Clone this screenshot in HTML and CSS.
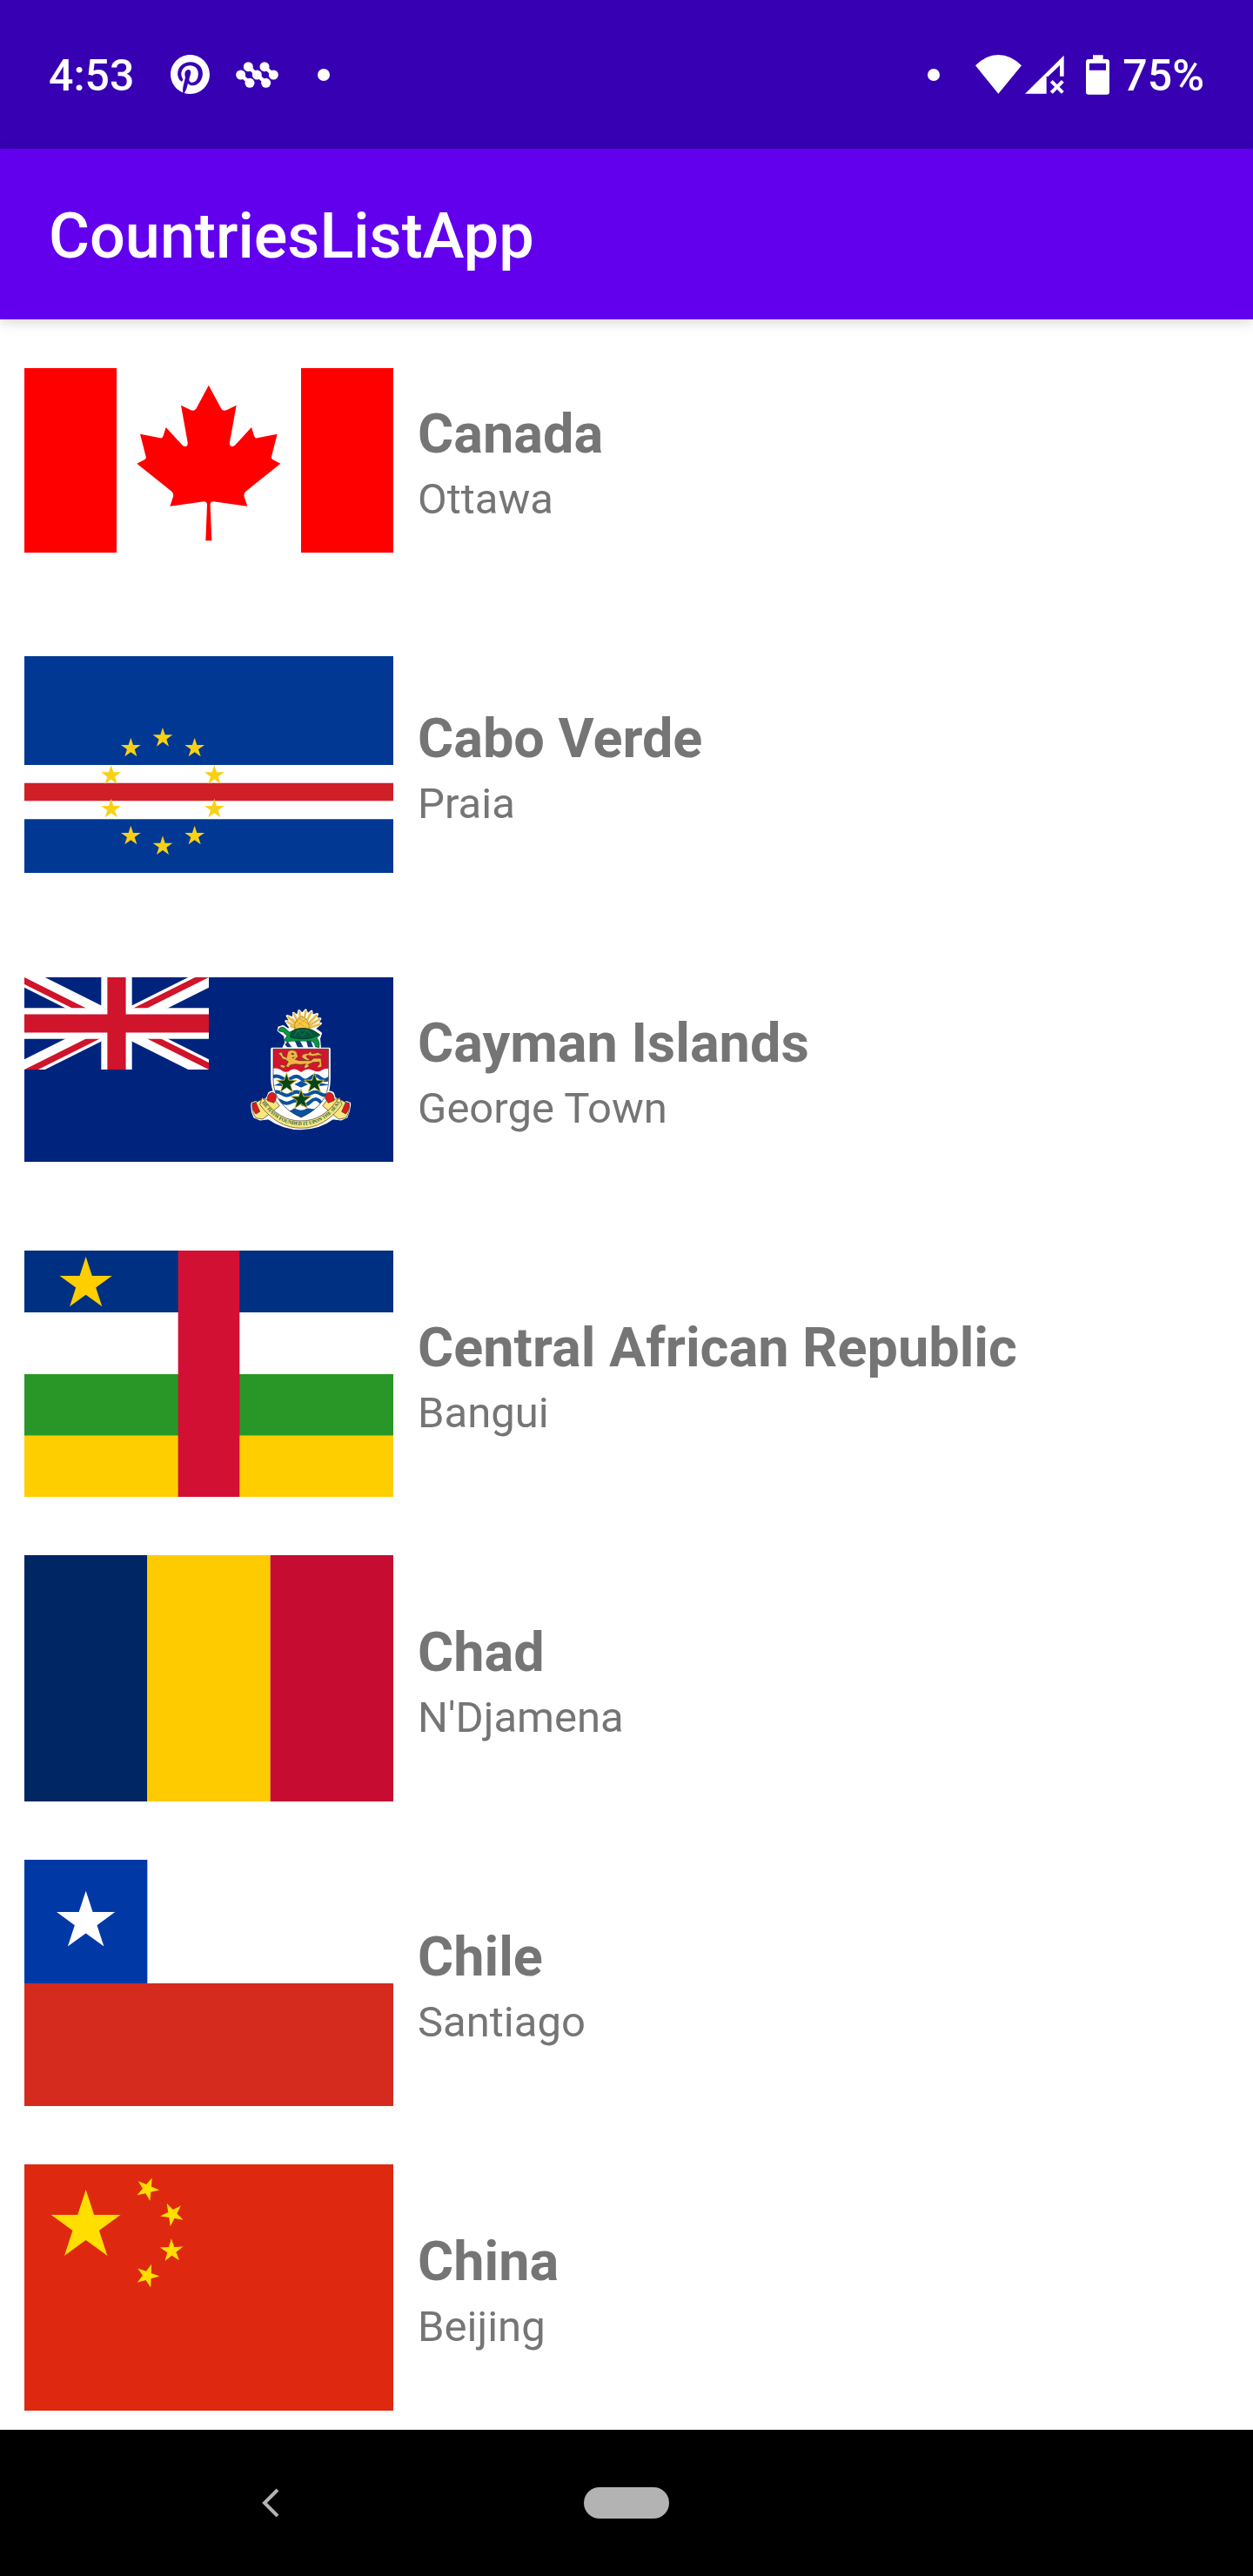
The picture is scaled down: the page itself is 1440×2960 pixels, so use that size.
FILE: index.html
```html
<!DOCTYPE html>
<html lang="en">
<head>
<meta charset="utf-8">
<meta name="viewport" content="width=device-width, initial-scale=1">
<title>CountriesListApp</title>
<link rel="stylesheet" href="styles.css">
</head>
<body>
<svg class="defs" aria-hidden="true">
  <defs>
    <polygon id="star" points="0,-100 22.5,-30.9 95.1,-30.9 36.3,11.8 58.8,80.9 0,38.2 -58.8,80.9 -36.3,11.8 -95.1,-30.9 -22.5,-30.9"/>
  </defs>
</svg>

<div class="status-bar">
  <div class="status-group">
    <time class="status-text">4:53</time>
    <svg class="icon-pinterest" viewBox="0 0 24 24" role="img" aria-label="Pinterest"><path fill="#fff" d="M12.017 0C5.396 0 .029 5.367.029 11.987c0 5.079 3.158 9.417 7.618 11.162-.105-.949-.199-2.403.041-3.439.219-.937 1.406-5.957 1.406-5.957s-.359-.72-.359-1.781c0-1.663.967-2.911 2.168-2.911 1.024 0 1.518.769 1.518 1.688 0 1.029-.653 2.567-.992 3.992-.285 1.193.6 2.165 1.775 2.165 2.128 0 3.768-2.245 3.768-5.487 0-2.861-2.063-4.869-5.008-4.869-3.41 0-5.409 2.562-5.409 5.199 0 1.033.394 2.143.889 2.741.099.12.112.225.085.345-.09.375-.293 1.199-.334 1.363-.053.225-.172.271-.401.165-1.495-.69-2.433-2.878-2.433-4.646 0-3.776 2.748-7.252 7.92-7.252 4.158 0 7.392 2.967 7.392 6.923 0 4.135-2.607 7.462-6.233 7.462-1.214 0-2.354-.629-2.758-1.379l-.749 2.848c-.269 1.045-1.004 2.352-1.498 3.146 1.123.345 2.306.535 3.55.535 6.607 0 11.985-5.365 11.985-11.987C23.97 5.39 18.592.026 11.985.026z"/></svg>
    <svg class="icon-dots" viewBox="0 0 147 90" aria-hidden="true">
      <g fill="#fff"><circle cx="43" cy="17" r="16.500"/><circle cx="99" cy="17" r="16.500"/><circle cx="17" cy="45" r="16.500"/><circle cx="73" cy="45" r="16.500"/><circle cx="130" cy="45" r="16.500"/><circle cx="48" cy="73" r="16.500"/><circle cx="104" cy="73" r="16.500"/></g>
      <path stroke="#fff" stroke-width="13" d="M43 17l61 56M99 17l31 28M17 45l31 28"/>
    </svg>
    <span class="dot"></span>
  </div>
  <div class="status-group">
    <span class="dot"></span>
    <svg class="icon-wifi" viewBox="0 0 159 135" role="img" aria-label="Wi-Fi"><path fill="#fff" d="M0 37Q36 0 79 0t80 37L79 134z"/></svg>
    <svg class="icon-signal" viewBox="0 0 135 135" role="img" aria-label="No mobile data"><path fill="#fff" d="M134 2v72h-14V36L80 74h-6v60H0z"/><path stroke="#fff" stroke-width="12" d="M91 91l39 39M130 91l-39 39"/></svg>
    <svg class="icon-battery" viewBox="0 0 81 138" role="img" aria-label="Battery"><path fill="#fff" fill-rule="evenodd" d="M24 1h35v14h13q9 0 9 9v104q0 9-9 9H9q-9 0-9-9V24q0-9 9-9h15zM12 29v24h57V29z"/></svg>
    <span class="status-text">75%</span>
  </div>
</div>

<header class="app-bar"><h1 class="app-title">CountriesListApp</h1></header>

<main class="content">
  <ul class="country-list">
    <li class="country">
      <svg class="flag" viewBox="84 69 1272 636" role="img" aria-label="Flag of Canada">
        <path fill="#fff" d="M84 69h1272v636H84z"/>
        <path fill="#f00" d="M84 69h318v636H84zM1038 69h318v636h-318z"/>
        <path fill="#f00" d="M719.500 128L676 209Q670 218 658 214L624 197L647 325Q648 339 638 339Q632 339 628 334L572 273L563 302Q560 312 552 310L483 296L503 374Q505 381 499 384L472 398L592 494Q599 500 597 512L586 545L703 529Q714 529 714 541L709 664H730L725 541Q725 529 736 529L853 545L842 512Q840 500 847 494L967 398L940 384Q934 381 936 374L956 296L887 310Q879 312 876 302L867 273L811 334Q807 339 801 339Q791 339 792 325L815 197L781 214Q769 218 763 209z"/>
      </svg>
      <div class="country-text"><h2 class="name">Canada</h2><p class="capital">Ottawa</p></div>
    </li>
    <li class="country">
      <svg class="flag flag-tall" viewBox="84 72 1272 747" role="img" aria-label="Flag of Cabo Verde">
        <path fill="#003893" d="M84 72h1272v747H84z"/><path fill="#fff" d="M84 447h1272v187H84z"/><path fill="#cf2027" d="M84 509h1272v62H84z"/>
        <g fill="#f7d116">
          <use href="#star" transform="translate(561 354) scale(.36)"/><use href="#star" transform="translate(451 389) scale(.36)"/><use href="#star" transform="translate(671 389) scale(.36)"/><use href="#star" transform="translate(383 483) scale(.36)"/><use href="#star" transform="translate(739 483) scale(.36)"/><use href="#star" transform="translate(383 599) scale(.36)"/><use href="#star" transform="translate(739 599) scale(.36)"/><use href="#star" transform="translate(451 692) scale(.36)"/><use href="#star" transform="translate(671 692) scale(.36)"/><use href="#star" transform="translate(561 727) scale(.36)"/>
        </g>
      </svg>
      <div class="country-text"><h2 class="name">Cabo Verde</h2><p class="capital">Praia</p></div>
    </li>
    <li class="country">
      <svg class="flag" viewBox="84 69 1272 636" role="img" aria-label="Flag of the Cayman Islands">
        <path fill="#00247d" d="M84 69h1272v636H84z"/>
        <svg x="84" y="69" width="636" height="318" viewBox="0 0 60 30">
          <clipPath id="saltire"><path d="M30 15h30v15zv15h-30zh-30v-15zv-15h30z"/></clipPath>
          <path stroke="#fff" stroke-width="6" d="M0 0l60 30M60 0L0 30"/>
          <path stroke="#cf142b" stroke-width="4" clip-path="url(#saltire)" d="M0 0l60 30M60 0L0 30"/>
          <path stroke="#fff" stroke-width="10" d="M30 0v30M0 15h60"/>
          <path stroke="#cf142b" stroke-width="6" d="M30 0v30M0 15h60"/>
        </svg>
        <g transform="translate(810 120)" stroke-linejoin="round">
          <!-- white outline behind the whole crest -->
          <path fill="#fff" stroke="#fff" stroke-width="9" d="M128 196H325V300Q324 340 316 350Q328 340 338 350L343 366L360 376L376 404L384 380L395 384Q395 405 384 430L366 438L338 434Q290 470 228 470T116 434L88 438L68 430Q57 410 60 384L72 380L80 400L95 376L112 366L118 350Q128 340 138 350Q128 320 128 300z"/>
          <path fill="#fff" stroke="#fff" stroke-width="8" d="M168 190L176 174L172 150L150 132L152 122L166 118L184 130L192 124L176 100L194 106L180 82L202 90L202 72L216 84L221 64L232 76L244 62L250 78L264 66L266 82L284 76L278 92L294 92L284 106L296 108L274 126L296 142L290 160L293 192z"/>
          <!-- pineapple -->
          <path stroke="#e9bd4a" stroke-width="8" fill="none" d="M230 132L178 101M230 132L182 84M230 132L202 72M230 132L222 65M230 132L245 63M230 132L264 68M230 132L283 78M230 132L294 92M230 132L295 110M230 132L190 116M230 132L196 92"/>
          <path fill="#f9c846" stroke="#a87925" stroke-width="2" d="M206 128Q202 96 230 82Q258 96 256 128z"/>
          <path stroke="#936b22" stroke-width="2" stroke-dasharray="4 5" fill="none" d="M212 100L250 126M220 90L256 112M246 92L208 122M234 86L206 106"/>
          <!-- turtle -->
          <path fill="#0b9444" stroke="#032" stroke-width="2" d="M150 128Q160 116 172 124L188 138Q240 110 294 147L282 158Q294 170 290 191L272 187L266 169H206L180 172L170 166L180 150Q170 144 168 138L151 134z"/>
          <path fill="#00563b" stroke="#022" stroke-width="2" d="M191 154Q190 130 220 125Q265 120 289 146Q265 164 225 161Q200 160 191 154z"/>
          <path fill="none" stroke="#1c8d5f" stroke-width="2" d="M205 152L216 132L232 152L250 130L266 150M216 132H250"/>
          <!-- wreath -->
          <path fill="#fff" d="M168 191Q172 172 194 170H264Q276 176 276 192z"/>
          <path fill="#123a7b" d="M182 170L196 190H180L172 180zM206 168L216 190H236L224 168zM246 168L252 190H270L262 168z"/>
          <!-- shield -->
          <clipPath id="shield"><path d="M132 196H323V304Q322 390 228 432Q134 390 132 304z"/></clipPath>
          <g clip-path="url(#shield)">
            <path fill="#fff" d="M128 190H328V440H128z"/>
            <path fill="#d31530" d="M128 194H328V264Q310 262 298 270T270 270Q250 258 228 276Q206 258 190 270T158 268Q146 260 128 264z"/>
            <g fill="none" stroke="#0b51a0" stroke-width="12"><path d="M126 294Q146 284 162 296T196 296T228 298T260 296T294 296T328 294"/><path d="M126 348Q146 338 162 350T196 350T228 350T260 350T294 350T328 348"/><path d="M126 378Q146 368 162 378T196 378T228 382T260 378T294 378T328 378"/></g>
            <path fill="#0b51a0" d="M205 318L228 306L252 318L228 329zM134 322L162 310L164 324zM292 312L326 320L292 324zM150 404Q184 420 205 400Q228 414 250 400Q282 408 306 396L228 440z"/>
          </g>
          <path fill="none" stroke="#191c20" stroke-width="2" d="M132 196H323V304Q322 390 228 432Q134 390 132 304z"/>
          <!-- lion -->
          <g fill="#efb547" stroke="#5e3315" stroke-width="2">
            <path d="M182 206Q194 194 212 205L218 222L208 232L222 236H262L272 228H297L300 257L286 262L284 255L291 250V241L270 242L252 250L257 256L242 264L238 257L244 248L225 250L208 248L190 252L186 260L174 256L168 263L154 256L160 250L176 254L184 240L176 234L164 230L158 220L149 211L162 206L166 220L178 226z"/>
            <path d="M230 219Q238 210 254 211L261 203L265 212Q276 212 286 208L306 219L286 218Q270 224 252 218Q236 220 260 233L250 236Q228 228 230 219z"/>
          </g>
          <path fill="#6b401c" d="M192 212l8-3 5 6-6 2zM195 226l12-3-6 6z"/>
          <g fill="#06441c" stroke="#e3c53d" stroke-width="7">
            <use href="#star" transform="translate(178 315) scale(.37)"/><use href="#star" transform="translate(274 315) scale(.37)"/><use href="#star" transform="translate(228 371) scale(.37)"/>
          </g>
          <!-- motto ribbon -->
          <g stroke="#3a3522" stroke-width="2">
            <path fill="#fbe67f" d="M96 368L60 386Q58 416 72 434L96 438L118 420L154 392L138 372z M359 368L394 386Q396 416 382 434L358 438L336 420L302 392L318 372z"/>
            <path fill="#e0181f" d="M60 382L72 380L86 412L72 420Q58 404 60 382zM394 382L382 380L368 412L382 420Q396 404 394 382zM112 366Q114 346 130 346Q144 350 142 368L134 382L112 374zM342 366Q340 346 324 346Q310 350 312 368L322 382L342 374z"/>
            <path fill="#fbe67f" d="M94 362Q150 445 228 444Q306 445 360 362L369 388Q310 469 228 469T86 388z"/>
          </g>
          <path id="motto-line" fill="none" d="M92 380Q146 459 228 459Q310 459 364 380"/>
          <text class="motto"><textPath href="#motto-line" startOffset="50%">HE HATH FOUNDED IT UPON THE SEAS</textPath></text>
        </g>
      </svg>
      <div class="country-text"><h2 class="name">Cayman Islands</h2><p class="capital">George Town</p></div>
    </li>
    <li class="country">
      <svg class="flag flag-tall" viewBox="84 51 1272 849" role="img" aria-label="Flag of the Central African Republic">
        <path fill="#003082" d="M84 51h1272v213H84z"/><path fill="#fff" d="M84 264h1272v213H84z"/><path fill="#289728" d="M84 477h1272v212H84z"/><path fill="#ffce00" d="M84 689h1272v211H84z"/><path fill="#d21034" d="M614 51h212v849H614z"/>
        <use href="#star" fill="#ffce00" transform="translate(296 167) scale(.95)"/>
      </svg>
      <div class="country-text"><h2 class="name">Central African Republic</h2><p class="capital">Bangui</p></div>
    </li>
    <li class="country">
      <svg class="flag flag-tall" viewBox="0 0 1272 849" role="img" aria-label="Flag of Chad">
        <path fill="#002664" d="M0 0h424v849H0z"/><path fill="#fecb00" d="M424 0h424v849H424z"/><path fill="#c60c30" d="M848 0h424v849H848z"/>
      </svg>
      <div class="country-text"><h2 class="name">Chad</h2><p class="capital">N'Djamena</p></div>
    </li>
    <li class="country">
      <svg class="flag flag-tall" viewBox="84 51 1272 849" role="img" aria-label="Flag of Chile">
        <path fill="#fff" d="M84 51h1272v849H84z"/><path fill="#0039a6" d="M84 51h424v426H84z"/><path fill="#d52b1e" d="M84 477h1272v423H84z"/>
        <use href="#star" fill="#fff" transform="translate(296 264) scale(1.060)"/>
      </svg>
      <div class="country-text"><h2 class="name">Chile</h2><p class="capital">Santiago</p></div>
    </li>
    <li class="country">
      <svg class="flag flag-tall" viewBox="84 81 1272 849" role="img" aria-label="Flag of China">
        <path fill="#de2910" d="M84 81h1272v849H84z"/>
        <g fill="#ffde00">
          <use href="#star" transform="translate(296 294) scale(1.260)"/>
          <use href="#star" transform="translate(508 166) rotate(23) scale(.42)"/><use href="#star" transform="translate(594 253) rotate(-27) scale(.42)"/><use href="#star" transform="translate(592 379) rotate(-2) scale(.42)"/><use href="#star" transform="translate(508 465) rotate(20) scale(.42)"/>
        </g>
      </svg>
      <div class="country-text"><h2 class="name">China</h2><p class="capital">Beijing</p></div>
    </li>
  </ul>
</main>

<nav class="nav-bar" aria-label="System navigation">
  <button class="nav-button" type="button" aria-label="Back"><svg class="icon-back" viewBox="0 0 21 34" aria-hidden="true"><path fill="none" stroke="#b3b3b3" stroke-width="4" d="M19 2L4 17l15 15"/></svg></button>
  <button class="nav-button" type="button" aria-label="Home"><span class="home-pill"></span></button>
</nav>
</body>
</html>
```
FILE: styles.css
```css
* {
  box-sizing: border-box;
}

body {
  margin: 0;
  min-height: 100vh;
  display: flex;
  flex-direction: column;
  background: #fff;
  font-family: Roboto, "Liberation Sans", sans-serif;
}

h1, h2, p, ul {
  margin: 0;
  padding: 0;
}

svg {
  display: block;
  flex: none;
}

.defs {
  position: absolute;
  width: 0;
  height: 0;
}

.status-bar {
  display: flex;
  justify-content: space-between;
  align-items: center;
  height: 171px;
  padding: 0 56px;
  background: #3700b3;
  color: #fff;
}

.status-group {
  display: flex;
  align-items: center;
}

.status-text {
  font-size: 50px;
  line-height: 60px;
  font-weight: 500;
  padding-top: 3px;
}

.dot {
  width: 14px;
  height: 14px;
  border-radius: 50%;
  background: #fff;
}

.icon-pinterest {
  width: 45px;
  height: 45px;
  margin: 0 30px 0 42px;
}

.icon-dots {
  width: 49px;
  height: 30px;
  margin-right: 45px;
}

.icon-wifi {
  width: 53px;
  height: 45px;
  margin: 0 4px 0 41px;
}

.icon-signal {
  width: 45px;
  height: 45px;
  margin-right: 25px;
}

.icon-battery {
  width: 27px;
  height: 46px;
  margin-right: 15px;
}

.app-bar {
  position: relative;
  display: flex;
  align-items: center;
  height: 196px;
  padding: 6px 56px 0;
  background: #6200ee;
  color: #fff;
  box-shadow: 0 4px 14px rgba(0, 0, 0, 0.15);
}

.app-title {
  font-size: 72px;
  line-height: 84px;
  font-weight: 500;
}

.content {
  flex: 1;
}

.country-list {
  display: flex;
  flex-direction: column;
  gap: 56px;
  padding: 15px 28px 16px;
  list-style: none;
}

.country {
  display: flex;
  align-items: center;
  gap: 28px;
  height: 294px;
}

.flag {
  width: 424px;
}

.flag-tall {
  margin-bottom: 1px;
}

.country-text {
  min-width: 0;
  color: #757575;
}

.name {
  font-size: 63px;
  line-height: 90px;
  font-weight: 700;
}

.capital {
  font-size: 49px;
  line-height: 60px;
}

.motto {
  font-family: "Liberation Serif", serif;
  font-size: 17px;
  font-weight: 700;
  fill: #17613f;
  text-anchor: middle;
}

.nav-bar {
  display: grid;
  grid-template-columns: repeat(3, 1fr);
  height: 168px;
  padding: 0 106px;
  background: #000;
}

.nav-button {
  display: flex;
  justify-content: center;
  align-items: center;
  padding: 0;
  border: 0;
  background: none;
}

.icon-back {
  width: 21px;
  height: 34px;
}

.home-pill {
  width: 98px;
  height: 36px;
  border-radius: 18px;
  background: #b3b3b3;
}
```
